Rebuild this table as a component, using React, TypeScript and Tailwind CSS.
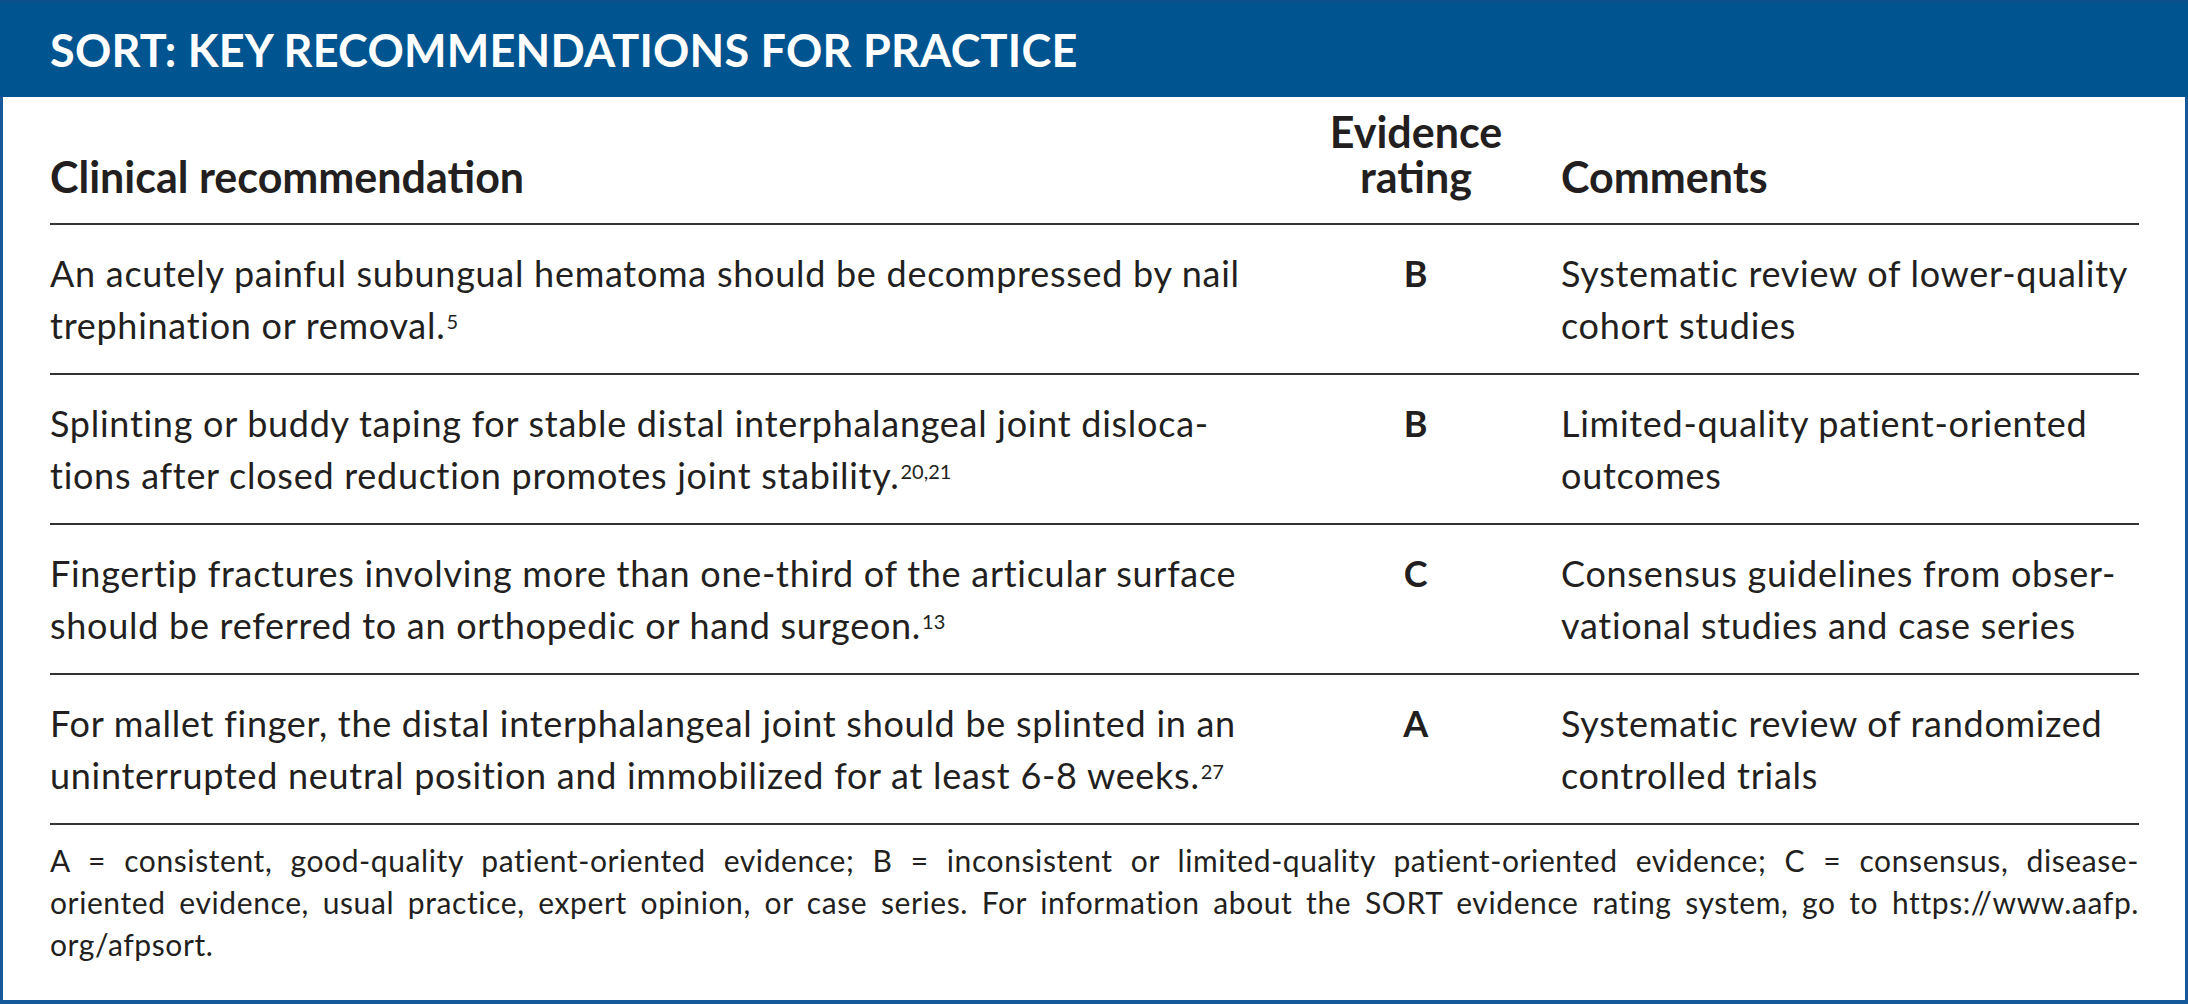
type Row = {
  rec: [string, string];
  refs: string;
  rating: string;
  comments: [string, string];
};

const rows: Row[] = [
  {
    rec: ["An acutely painful subungual hematoma should be decompressed by nail", "trephination or removal."],
    refs: "5",
    rating: "B",
    comments: ["Systematic review of lower-quality", "cohort studies"],
  },
  {
    rec: [
      "Splinting or buddy taping for stable distal interphalangeal joint disloca-",
      "tions after closed reduction promotes joint stability.",
    ],
    refs: "20,21",
    rating: "B",
    comments: ["Limited-quality patient-oriented", "outcomes"],
  },
  {
    rec: [
      "Fingertip fractures involving more than one-third of the articular surface",
      "should be referred to an orthopedic or hand surgeon.",
    ],
    refs: "13",
    rating: "C",
    comments: ["Consensus guidelines from obser-", "vational studies and case series"],
  },
  {
    rec: [
      "For mallet finger, the distal interphalangeal joint should be splinted in an",
      "uninterrupted neutral position and immobilized for at least 6-8 weeks.",
    ],
    refs: "27",
    rating: "A",
    comments: ["Systematic review of randomized", "controlled trials"],
  },
];

export default function App() {
  return (
    <div className="w-[2188px] h-[1004px] flex flex-col bg-white border-x-[3px] border-b-4 border-[#15599b] text-[#231f20] font-['Lato','Liberation_Sans',sans-serif]">
      <div className="h-[97px] shrink-0 flex items-center bg-[#00548f] px-[50px] -mx-[3px] border-t-[3px] border-[#0b4f8c]">
        <h1 className="text-[45px] leading-none font-bold tracking-[0.005em] text-white">
          SORT: KEY RECOMMENDATIONS FOR PRACTICE
        </h1>
      </div>

      <div className="flex flex-col px-[47px] pr-[46px]">
        <div className="grid grid-cols-[1250px_232px_1fr] items-end pt-[12px] pb-[24px] border-b-2 border-[#333] text-[43px] leading-[45px] font-bold">
          <div>Clinical recommendation</div>
          <div className="flex flex-col text-center">
            <span>Evidence</span>
            <span>rating</span>
          </div>
          <div className="pl-[29px]">Comments</div>
        </div>

        {rows.map((row) => (
          <div
            key={row.rec[0]}
            className="grid grid-cols-[1250px_232px_1fr] py-[22px] border-b-2 border-[#333] text-[36px] leading-[52px] tracking-[0.02em] whitespace-nowrap"
          >
            <div>
              <div>{row.rec[0]}</div>
              <div>
                {row.rec[1]}
                <sup className="text-[20px] ml-px tracking-normal">{row.refs}</sup>
              </div>
            </div>
            <div className="text-center font-bold">{row.rating}</div>
            <div className="pl-[29px]">
              <div>{row.comments[0]}</div>
              <div>{row.comments[1]}</div>
            </div>
          </div>
        ))}

        <div className="pt-[14px] text-[30px] leading-[42px] tracking-[0.02em]">
          <p className="[text-align-last:justify]">
            A = consistent, good-quality patient-oriented evidence; B = inconsistent or limited-quality patient-oriented
            evidence; C = consensus, disease-
          </p>
          <p className="[text-align-last:justify]">
            oriented evidence, usual practice, expert opinion, or case series. For information about the SORT evidence
            rating system, go to https://www.aafp.
          </p>
          <p>org/afpsort.</p>
        </div>
      </div>
    </div>
  );
}
